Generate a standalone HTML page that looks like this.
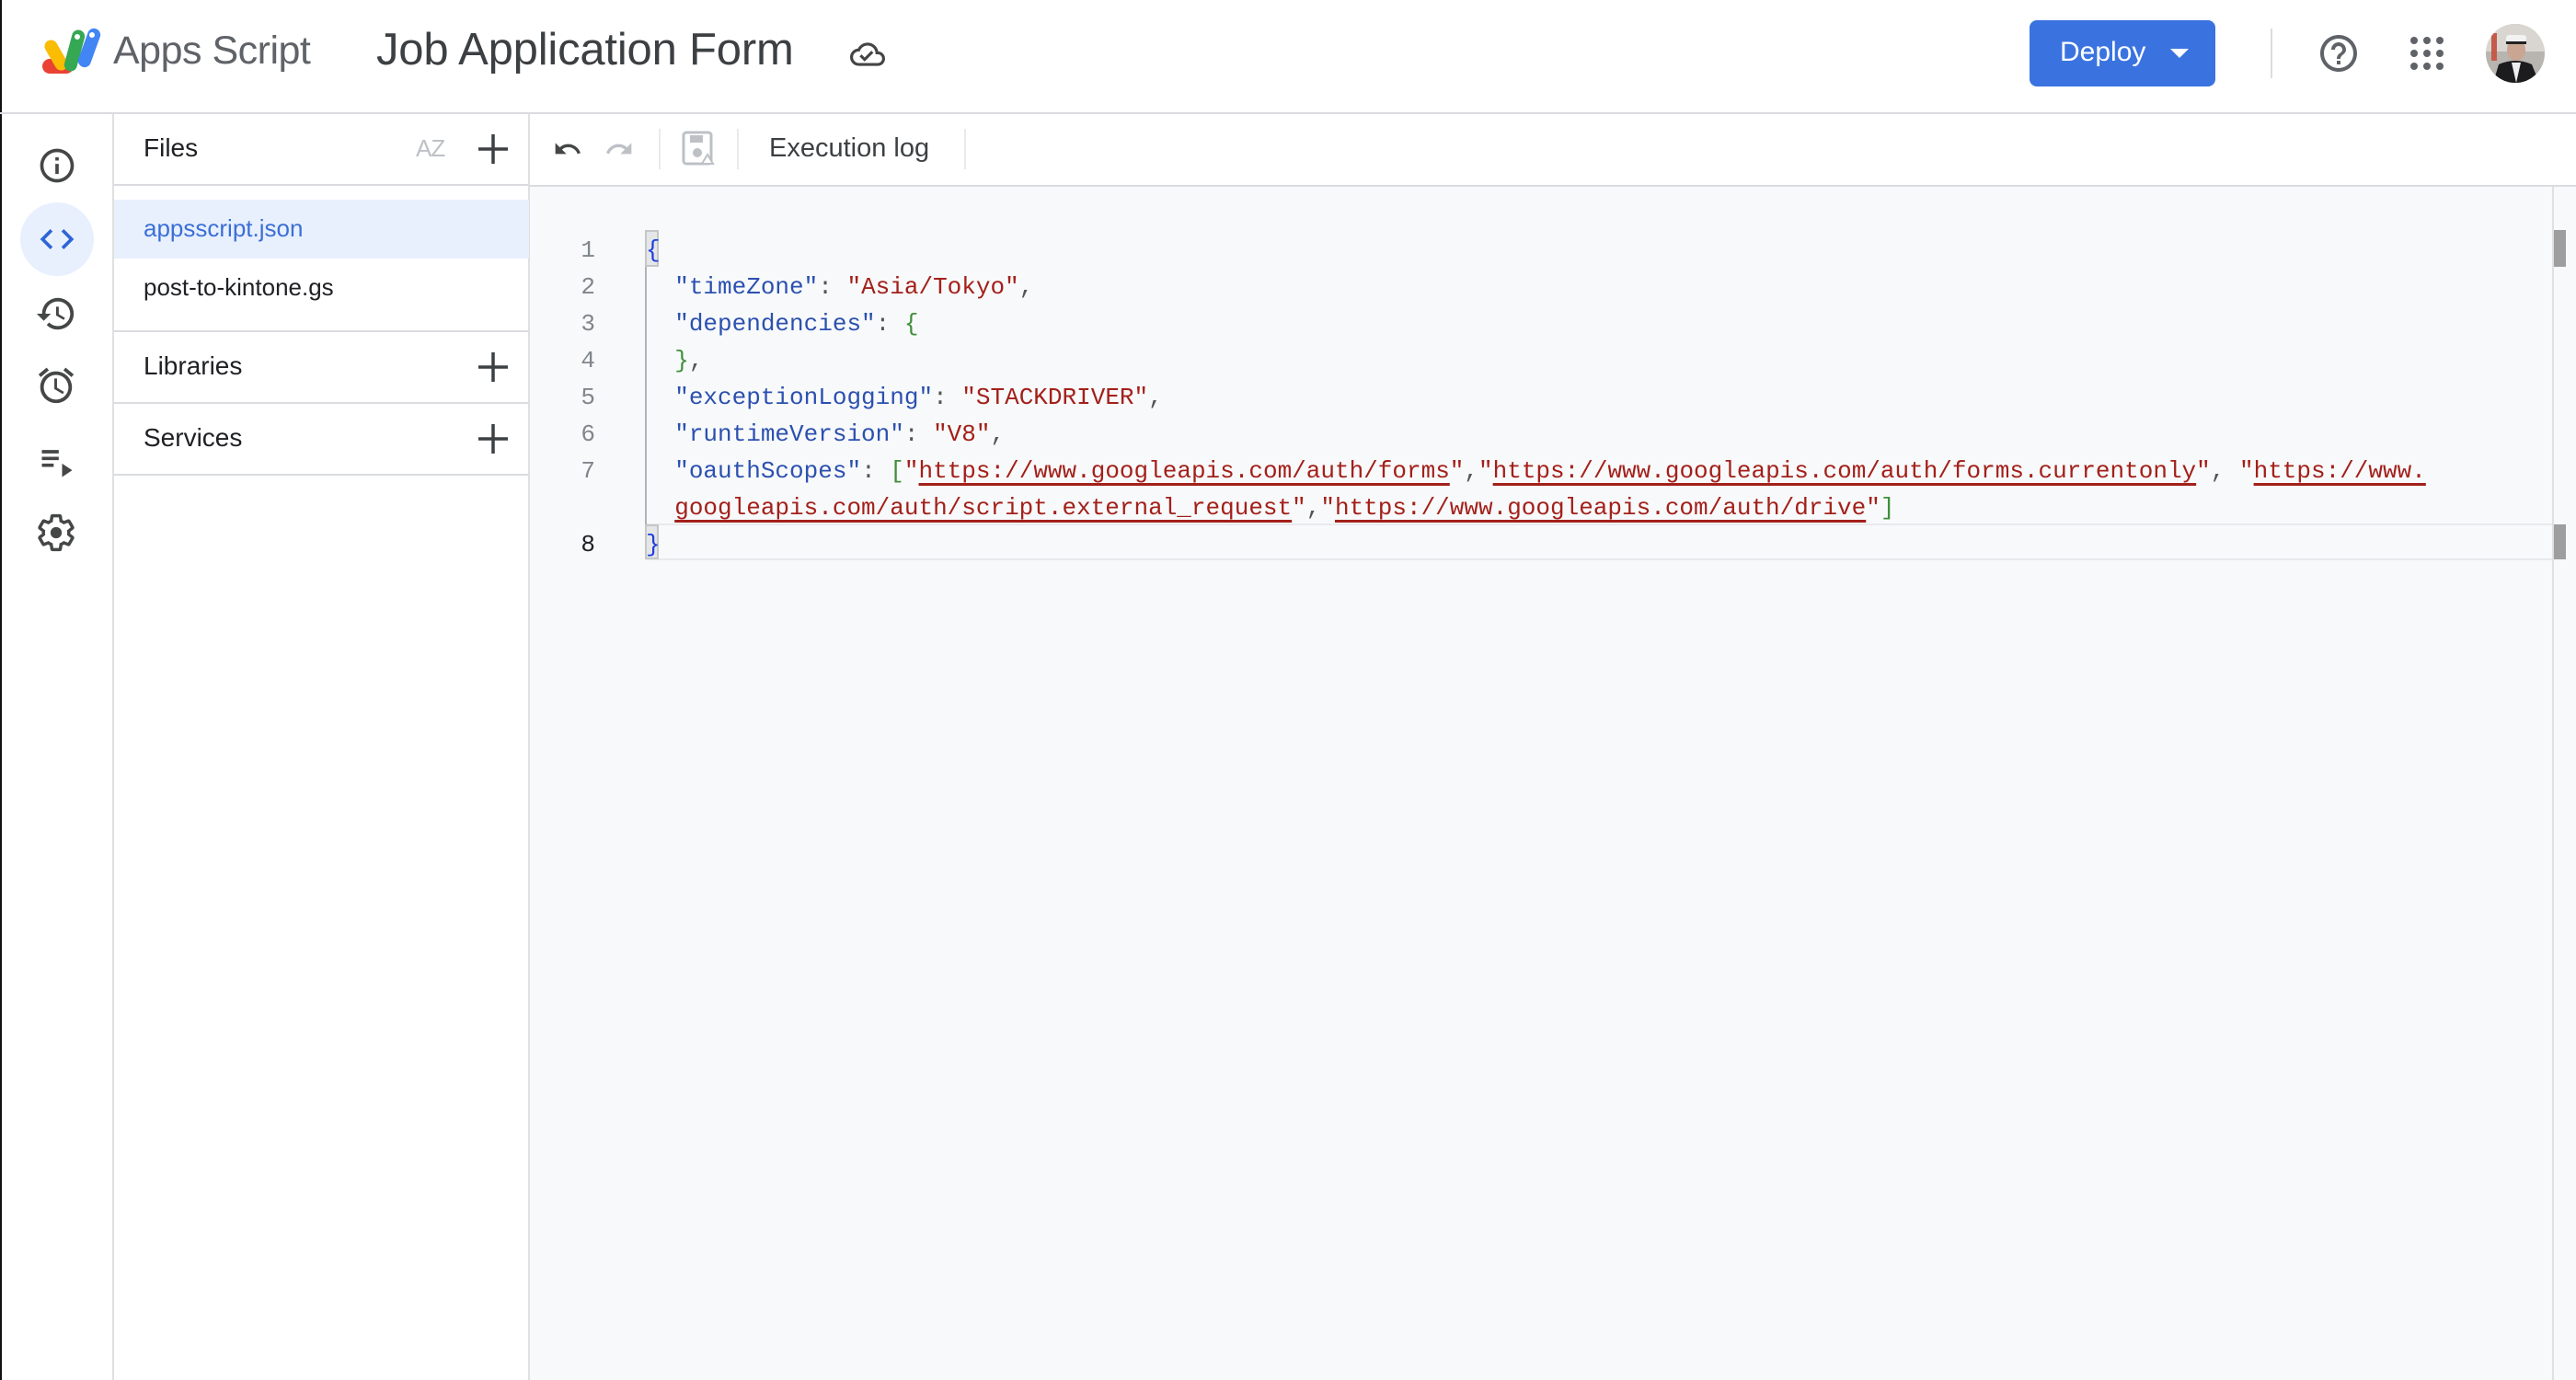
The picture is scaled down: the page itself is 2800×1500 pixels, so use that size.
<!DOCTYPE html>
<html><head><meta charset="utf-8"><style>
*{margin:0;padding:0;box-sizing:border-box}
body{width:2800px;height:1500px;overflow:hidden;background:#fff;font-family:"Liberation Sans",Arial,sans-serif;position:relative;color:#202124}
.abs{position:absolute}
.hl{position:absolute;background:#dadce0}
.code{position:absolute;font-family:"Liberation Mono",monospace;font-size:26px;line-height:40px;white-space:pre;color:#555}
.k{color:#2b50b0}.s{color:#a3201a}.g{color:#3f8f3a}.b{color:#1f3fe0}
.u{text-decoration:underline;text-decoration-thickness:3px;text-underline-offset:6px;text-decoration-color:#a3201a}
.ln{position:absolute;left:580px;width:67px;text-align:right;font-family:"Liberation Mono",monospace;font-size:26px;line-height:40px;color:#80868b}
svg.i{position:absolute;fill:#5f6368}
</style></head><body>
<div class="abs" style="left:0;top:0;width:2px;height:1500px;background:#111"></div>
<div class="hl" style="left:0;top:122px;width:2800px;height:2px"></div>
<svg class="abs" style="left:44px;top:28px" width="68" height="56" viewBox="0 0 68 56">
<rect x="2" y="36" width="34" height="16" rx="8" fill="#e94235"/>
<rect x="10" y="14" width="14" height="36" rx="7" transform="rotate(-30 17 32)" fill="#fbbc04"/>
<rect x="30" y="4" width="14" height="46" rx="7" transform="rotate(15 37 27)" fill="#34a853"/>
<rect x="46" y="2" width="14" height="44" rx="7" transform="rotate(20 53 24)" fill="#4285f4"/>
<circle cx="56" cy="10" r="3" fill="#fff"/><circle cx="40" cy="12" r="3" fill="#fff"/>
</svg>
<div class="abs" style="left:123px;top:31px;font-size:43px;color:#5f6368;letter-spacing:-0.5px">Apps Script</div>
<div class="abs" style="left:409px;top:26px;font-size:49px;color:#3c4043;letter-spacing:-0.2px">Job Application Form</div>
<svg class="i" style="left:924px;top:40px;fill:#444" width="38" height="38" viewBox="0 0 24 24"><path d="M19.35 10.04A7.490 7.490 0 0 0 12 4C9.11 4 6.6 5.64 5.35 8.04A5.994 5.994 0 0 0 0 14c0 3.31 2.69 6 6 6h13c2.76 0 5-2.24 5-5 0-2.64-2.05-4.78-4.65-4.960zM19 18H6c-2.21 0-4-1.79-4-4s1.79-4 4-4h.71C7.37 7.69 9.48 6 12 6c3.04 0 5.5 2.46 5.5 5.5v.5H19c1.66 0 3 1.34 3 3s-1.34 3-3 3zm-9-3.82l-2.09-2.09L6.5 13.5 10 17l6.01-6.01-1.41-1.41z"/></svg>
<div class="abs" style="left:2206px;top:22px;width:202px;height:72px;background:#3a73e0;border-radius:8px"></div>
<div class="abs" style="left:2239px;top:40px;font-size:30px;color:#fff">Deploy</div>
<div class="abs" style="left:2359px;top:53px;width:0;height:0;border-left:10px solid transparent;border-right:10px solid transparent;border-top:10px solid #fff"></div>
<div class="hl" style="left:2468px;top:31px;width:2px;height:54px"></div>
<svg class="i" style="left:2518px;top:34px" width="48" height="48" viewBox="0 0 24 24"><path d="M11 18h2v-2h-2v2zm1-16C6.48 2 2 6.48 2 12s4.48 10 10 10 10-4.48 10-10S17.52 2 12 2zm0 18c-4.41 0-8-3.59-8-8s3.59-8 8-8 8 3.59 8 8-3.590 8-8 8zm0-14c-2.21 0-4 1.79-4 4h2c0-1.1.9-2 2-2s2 .9 2 2c0 2-3 1.75-3 5h2c0-2.25 3-2.5 3-5 0-2.21-1.79-4-4-4z"/></svg>
<svg class="i" style="left:2620px;top:40px" width="36" height="36" viewBox="0 0 36 36"><g fill="#5f6368"><circle cx="4" cy="4" r="4"/><circle cx="18" cy="4" r="4"/><circle cx="32" cy="4" r="4"/><circle cx="4" cy="18" r="4"/><circle cx="18" cy="18" r="4"/><circle cx="32" cy="18" r="4"/><circle cx="4" cy="32" r="4"/><circle cx="18" cy="32" r="4"/><circle cx="32" cy="32" r="4"/></g></svg>
<svg class="abs" style="left:2702px;top:26px" width="64" height="64" viewBox="0 0 64 64"><defs><clipPath id="c"><circle cx="32" cy="32" r="32"/></clipPath></defs><g clip-path="url(#c)"><rect width="64" height="64" fill="#b8b4b0"/><rect x="0" y="0" width="64" height="30" fill="#d9d6d2"/><rect x="6" y="10" width="6" height="30" fill="#c65a4a"/><ellipse cx="33" cy="28" rx="10" ry="12" fill="#c9a592"/><rect x="22" y="12" width="22" height="8" rx="3" fill="#f2f2f2"/><rect x="22" y="19" width="22" height="3" fill="#222"/><path d="M8 64 L14 44 Q32 36 50 44 L58 64Z" fill="#1c1c1f"/><path d="M28 42 L33 64 L38 42Z" fill="#eee"/></g></svg>
<div class="abs" style="left:122px;top:124px;width:2px;height:1376px;background:#e0e0e0"></div>
<svg class="i" style="left:40px;top:158px;fill:#444746" width="44" height="44" viewBox="0 0 24 24"><path d="M11 7h2v2h-2zm0 4h2v6h-2zm1-9C6.48 2 2 6.48 2 12s4.48 10 10 10 10-4.48 10-10S17.52 2 12 2zm0 18c-4.41 0-8-3.59-8-8s3.59-8 8-8 8 3.59 8 8-3.59 8-8 8z"/></svg>
<div class="abs" style="left:22px;top:220px;width:80px;height:80px;border-radius:40px;background:#e8f0fe"></div>
<svg class="i" style="left:40px;top:238px;fill:#2f64d6" width="44" height="44" viewBox="0 0 24 24"><path d="M9.4 16.6L4.8 12l4.6-4.6L8 6l-6 6 6 6 1.4-1.4zm5.2 0l4.6-4.6-4.6-4.6L16 6l6 6-6 6-1.4-1.4z"/></svg>
<svg class="i" style="left:38px;top:318px;fill:#444746" width="46" height="46" viewBox="0 0 24 24"><path d="M13 3a9 9 0 0 0-9 9H1l3.89 3.89.07.14L9 12H6c0-3.87 3.13-7 7-7s7 3.13 7 7-3.13 7-7 7c-1.93 0-3.68-.79-4.94-2.06l-1.42 1.42A8.954 8.954 0 0 0 13 21a9 9 0 0 0 0-18zm-1 5v5l4.28 2.54.72-1.21-3.5-2.08V8H12z"/></svg>
<svg class="i" style="left:38px;top:396px;fill:#444746" width="46" height="46" viewBox="0 0 24 24"><path d="M22 5.72l-4.6-3.86-1.29 1.53 4.6 3.86L22 5.72zM7.88 3.39L6.6 1.86 2 5.71l1.29 1.53 4.59-3.85zM12.5 8H11v6l4.75 2.85.75-1.23-4-2.37V8zM12 4c-4.97 0-9 4.03-9 9s4.02 9 9 9a9 9 0 0 0 0-18zm0 16c-3.87 0-7-3.13-7-7s3.13-7 7-7 7 3.13 7 7-3.13 7-7 7z"/></svg>
<svg class="i" style="left:40px;top:480px;fill:#444746" width="44" height="44" viewBox="0 0 24 24"><path d="M3 5h10v2H3zm0 4h10v2H3zm0 4h7v2H3zm12 0v8l6-4z"/></svg>
<svg class="i" style="left:38px;top:556px" width="46" height="46" viewBox="0 0 24 24"><path fill="none" stroke="#444746" stroke-width="1.8" d="M19.14 12.94c.04-.3.06-.61.06-.94 0-.32-.02-.64-.07-.94l2.03-1.58a.49.49 0 0 0 .12-.61l-1.92-3.32a.488.488 0 0 0-.59-.22l-2.39.96c-.5-.38-1.03-.7-1.62-.94l-.36-2.54a.484.484 0 0 0-.48-.41h-3.84c-.24 0-.43.17-.47.41l-.36 2.54c-.59.24-1.13.57-1.62.94l-2.39-.96c-.22-.08-.47 0-.59.22L2.74 8.87c-.12.21-.08.47.12.61l2.03 1.58c-.05.3-.09.63-.09.94s.02.64.07.94l-2.03 1.58a.49.49 0 0 0-.12.61l1.92 3.32c.12.22.37.29.59.22l2.39-.96c.5.38 1.03.7 1.62.94l.36 2.54c.05.24.24.41.48.41h3.84c.24 0 .44-.17.47-.41l.36-2.54c.59-.24 1.13-.56 1.62-.94l2.39.96c.22.08.47 0 .59-.22l1.92-3.32c.12-.22.07-.47-.12-.61z"/><circle cx="12" cy="12" r="3.2" fill="#444746"/></svg>
<div class="abs" style="left:574px;top:124px;width:2px;height:1376px;background:#e0e0e0"></div>
<div class="abs" style="left:156px;top:145px;font-size:28px;color:#202124">Files</div>
<div class="abs" style="left:452px;top:146px;font-size:26px;color:#bdc1c6;letter-spacing:-1px">AZ</div>
<svg class="abs" style="left:517px;top:143px" width="38" height="38" viewBox="0 0 38 38"><path d="M19 3v32M3 19h32" stroke="#3c4043" stroke-width="3.5"/></svg>
<div class="hl" style="left:124px;top:200px;width:451px;height:2px"></div>
<div class="abs" style="left:124px;top:217px;width:451px;height:64px;background:#e8f0fe"></div>
<div class="abs" style="left:156px;top:233px;font-size:26px;color:#3b6fd6">appsscript.json</div>
<div class="abs" style="left:156px;top:297px;font-size:26px;color:#202124">post-to-kintone.gs</div>
<div class="hl" style="left:124px;top:359px;width:451px;height:2px"></div>
<div class="abs" style="left:156px;top:382px;font-size:28px;color:#202124">Libraries</div>
<svg class="abs" style="left:517px;top:380px" width="38" height="38" viewBox="0 0 38 38"><path d="M19 3v32M3 19h32" stroke="#3c4043" stroke-width="3.5"/></svg>
<div class="hl" style="left:124px;top:437px;width:451px;height:2px"></div>
<div class="abs" style="left:156px;top:460px;font-size:28px;color:#202124">Services</div>
<svg class="abs" style="left:517px;top:458px" width="38" height="38" viewBox="0 0 38 38"><path d="M19 3v32M3 19h32" stroke="#3c4043" stroke-width="3.5"/></svg>
<div class="hl" style="left:124px;top:515px;width:451px;height:2px"></div>
<svg class="i" style="left:601px;top:146px;fill:#444746" width="32" height="32" viewBox="0 0 24 24"><path d="M12.5 8c-2.65 0-5.05.99-6.9 2.6L2 7v9h9l-3.62-3.62c1.39-1.16 3.16-1.88 5.12-1.88 3.54 0 6.55 2.31 7.6 5.5l2.37-.78C21.08 11.03 17.15 8 12.5 8z"/></svg>
<svg class="i" style="left:657px;top:146px;fill:#bdc1c6" width="32" height="32" viewBox="0 0 24 24"><path d="M18.4 10.6C16.55 8.99 14.15 8 11.5 8c-4.65 0-8.58 3.03-9.96 7.22L3.9 16c1.05-3.19 4.05-5.5 7.6-5.5 1.95 0 3.73.72 5.12 1.88L13 16h9V7l-3.6 3.6z"/></svg>
<div class="hl" style="left:716px;top:140px;width:2px;height:44px;background:#e8eaed"></div>
<svg class="abs" style="left:741px;top:142px" width="38" height="40" viewBox="0 0 38 40"><rect x="2" y="2" width="30" height="34" rx="3" fill="none" stroke="#bdc1c6" stroke-width="3"/><rect x="9" y="5" width="14" height="8" fill="#bdc1c6"/><circle cx="17" cy="24" r="5" fill="#bdc1c6"/><path d="M28 26l6 10h-12z" fill="#fff" stroke="#bdc1c6" stroke-width="2"/></svg>
<div class="hl" style="left:801px;top:140px;width:2px;height:44px;background:#e8eaed"></div>
<div class="abs" style="left:836px;top:145px;font-size:29px;color:#3c4043">Execution log</div>
<div class="hl" style="left:1048px;top:140px;width:2px;height:44px;background:#e8eaed"></div>
<div class="abs" style="left:576px;top:201px;width:2224px;height:1299px;background:#f8f9fa;border-top:2px solid #dadce0"></div>
<div class="abs" style="left:2774px;top:203px;width:2px;height:1297px;background:#e0e0e0"></div>
<div class="abs" style="left:2776px;top:250px;width:13px;height:40px;background:#9e9e9e"></div>
<div class="abs" style="left:2776px;top:570px;width:13px;height:38px;background:#9e9e9e"></div>
<div class="abs" style="left:702px;top:569px;width:2072px;height:40px;border-top:2px solid #e8eaed;border-bottom:2px solid #e8eaed"></div>
<div class="abs" style="left:701px;top:250px;width:2px;height:358px;background:#b0b3b8"></div>
<div class="abs" style="left:701px;top:250px;width:15px;height:40px;background:#e4e6e8;border:2px solid #c4c7c5"></div>
<div class="abs" style="left:701px;top:570px;width:15px;height:38px;background:#e4e6e8;border:2px solid #c4c7c5"></div>
<div class="ln" style="top:252px">1</div>
<div class="ln" style="top:292px">2</div>
<div class="ln" style="top:332px">3</div>
<div class="ln" style="top:372px">4</div>
<div class="ln" style="top:412px">5</div>
<div class="ln" style="top:452px">6</div>
<div class="ln" style="top:492px">7</div>
<div class="ln" style="top:572px;color:#202124">8</div>
<div class="code" style="left:702px;top:252px"><span class="b">{</span>
  <span class="k">"timeZone"</span>: <span class="s">"Asia/Tokyo"</span>,
  <span class="k">"dependencies"</span>: <span class="g">{</span>
  <span class="g">}</span>,
  <span class="k">"exceptionLogging"</span>: <span class="s">"STACKDRIVER"</span>,
  <span class="k">"runtimeVersion"</span>: <span class="s">"V8"</span>,
  <span class="k">"oauthScopes"</span>: <span class="g">[</span><span class="s">"<span class="u">https://www.googleapis.com/auth/forms</span>"</span>,<span class="s">"<span class="u">https://www.googleapis.com/auth/forms.currentonly</span>"</span>, <span class="s">"<span class="u">https://www.</span></span>
  <span class="s"><span class="u">googleapis.com/auth/script.external_request</span>"</span>,<span class="s">"<span class="u">https://www.googleapis.com/auth/drive</span>"</span><span class="g">]</span>
<span class="b">}</span></div>
</body></html>
